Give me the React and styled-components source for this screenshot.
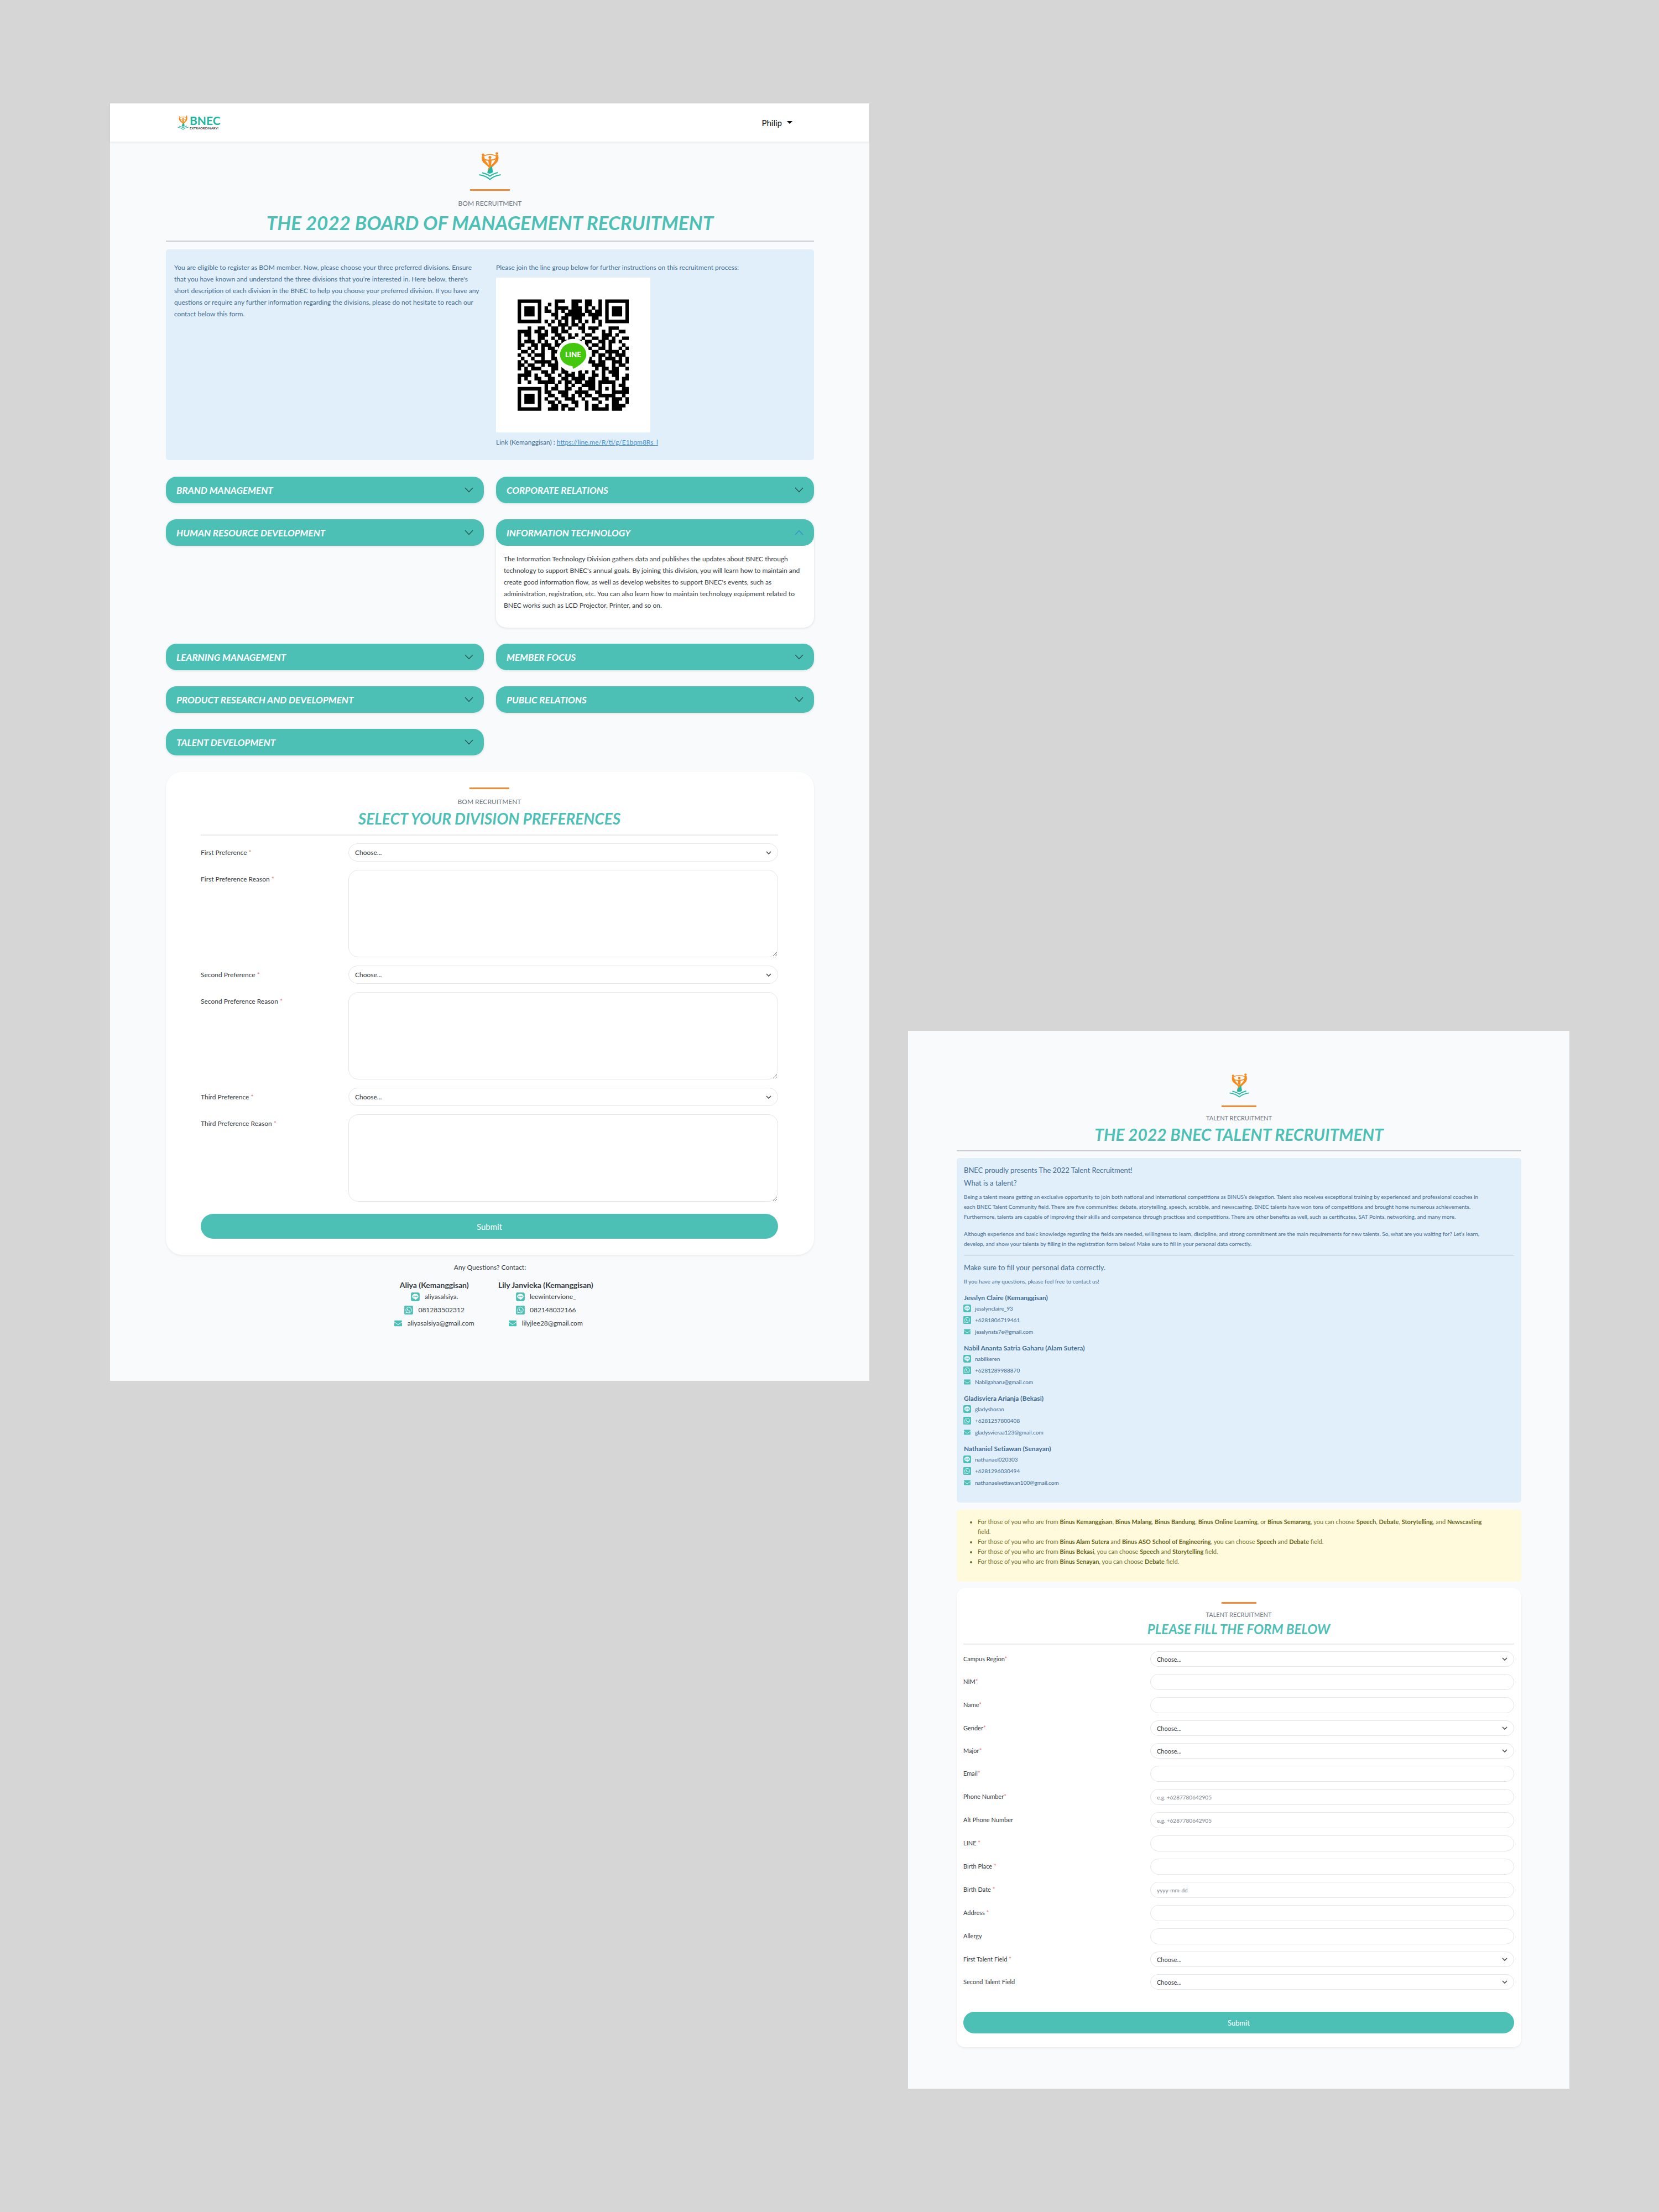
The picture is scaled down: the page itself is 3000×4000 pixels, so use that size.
import React from "react";
import styled, { createGlobalStyle } from "styled-components";
import { FaLine, FaWhatsappSquare, FaEnvelope } from "react-icons/fa";

const teal = "#4dc0b5";
const ink = "#343a40";
const blueInk = "#436c90";

const GlobalStyle = createGlobalStyle`
  *, *::before, *::after { box-sizing: border-box; }
  body {
    margin: 0;
    background: #d6d6d6;
    color: ${ink};
    font-family: Lato, "Liberation Sans", sans-serif;
    font-size: 12px;
  }
  h1, h2, h3, h4, p, ul, dl, dd { margin: 0; padding: 0; }
  button, input, select, textarea { font-family: inherit; }
`;

const Board = styled.div`
  display: grid;
  grid-template-columns: minmax(0, 1373fr) minmax(0, 1196fr);
  align-items: start;
  gap: 70px;
  padding: 187px 162px 60px 199px;
`;

const BomPage = styled.main`
  background: #f8fafc;
  padding-bottom: 92px;
`;

const TalentPage = styled.main`
  margin-top: 1677px;
  background: #f9fafc;
  padding: 77px 87px 75px 88px;
  font-size: 10px;
`;

const TopBar = styled.header`
  display: flex;
  align-items: center;
  justify-content: space-between;
  height: 69px;
  padding: 0 139px 0 122px;
  background: #fff;
  box-shadow: 0 2px 4px rgba(0, 0, 0, 0.07);
`;

const Brand = styled.a`
  display: flex;
  align-items: center;
  gap: 2px;
  text-decoration: none;
`;

const BrandText = styled.span`
  display: flex;
  flex-direction: column;
`;

const BrandName = styled.span`
  color: #1fb7a1;
  font-size: 21px;
  font-weight: 700;
  line-height: 20px;
`;

const BrandTag = styled.span`
  color: #444;
  font-size: 6px;
  font-weight: 700;
  line-height: 8px;
`;

const UserMenu = styled.button`
  display: flex;
  align-items: center;
  gap: 9px;
  padding: 0;
  border: 0;
  background: none;
  color: #111;
  font-size: 15px;
  line-height: 20px;
`;

const Caret = styled.span`
  border: 5px solid transparent;
  border-top-color: #111;
  border-bottom: 0;
`;

const Content = styled.div`
  padding: 19px 100px 0 101px;
`;

const Heading = styled.div`
  display: flex;
  flex-direction: column;
  align-items: center;
  text-align: center;
`;

const Bar = styled.span`
  width: ${(p) => (p.$small ? 63 : 72)}px;
  height: 3px;
  margin-top: ${(p) => p.$top}px;
  background: #f08b36;
`;

const Kicker = styled.p`
  margin-top: ${(p) => (p.$small ? 11 : 13)}px;
  color: #6c757d;
  font-size: ${(p) => (p.$small ? 11 : 12)}px;
  line-height: ${(p) => (p.$small ? 18 : 20)}px;
`;

const Title = styled.h1`
  margin-top: 3px;
  color: ${teal};
  font-size: ${(p) => p.$size}px;
  font-style: italic;
  font-weight: 700;
  line-height: ${(p) => p.$line}px;
`;

const Rule = styled.hr`
  width: 100%;
  height: 2px;
  margin: 12px 0 ${(p) => (p.$small ? 12 : 14)}px;
  border: 0;
  background: ${(p) => (p.$light ? "#e9ebec" : "#cacccf")};
`;

const Notice = styled.section`
  display: grid;
  grid-template-columns: 1fr 1fr;
  gap: 22px;
  padding: 22px 15px;
  border-radius: 5px;
  background: #e1effb;
  color: ${blueInk};
  line-height: 21px;
`;

const QrFrame = styled.div`
  width: 279px;
  height: 280px;
  margin: 8px 0 7px;
  padding: 39px;
  background: #fff;
  svg { display: block; width: 100%; height: 100%; }
`;

const TextLink = styled.a`
  color: #3f90d8;
`;

const Divisions = styled.section`
  display: grid;
  grid-template-columns: 1fr 1fr;
  align-items: start;
  gap: 29px 22px;
  margin: 30px 0;
`;

const Division = styled.article`
  border-radius: 19px;
  background: #fff;
  box-shadow: 0 1px 4px rgba(0, 0, 0, 0.12);
`;

const DivisionToggle = styled.button`
  display: flex;
  align-items: center;
  justify-content: space-between;
  width: 100%;
  height: 48px;
  padding: 0 19px;
  border: 0;
  border-radius: 19px;
  background: ${teal};
  color: #fff;
  font-size: 17px;
  font-style: italic;
  font-weight: 700;
  svg { width: 16px; height: 10px; }
`;

const DivisionText = styled.p`
  padding: 13px 14px 30px;
  line-height: 21px;
`;

const Card = styled.form`
  border-radius: ${(p) => (p.$small ? 15 : 29)}px;
  background: #fff;
  box-shadow: 0 2px 4px rgba(0, 0, 0, 0.06);
  padding: ${(p) => (p.$small ? "25px 13px 25px 12px" : "28px 65px 29px 63px")};
`;

const Fields = styled.div`
  display: flex;
  flex-direction: column;
  gap: ${(p) => (p.$small ? 13 : 15)}px;
`;

const FieldRow = styled.div`
  display: grid;
  grid-template-columns: ${(p) => (p.$small ? "338px 1fr" : "267px 1fr")};
  align-items: start;
`;

const Label = styled.label`
  font-size: ${(p) => (p.$small ? 11 : 12)}px;
  line-height: ${(p) => (p.$small ? 28 : 33)}px;
`;

const Required = styled.span`
  color: #e3706d;
`;

const SelectWrap = styled.div`
  position: relative;
  display: flex;
  svg {
    position: absolute;
    top: 50%;
    right: 12px;
    width: 10px;
    height: 8px;
    margin-top: -4px;
    pointer-events: none;
  }
`;

const Select = styled.select`
  width: 100%;
  height: ${(p) => (p.$small ? 28 : 33)}px;
  padding: 0 30px 0 11px;
  border: 1px solid #e3e6e8;
  border-radius: 17px;
  appearance: none;
  background: #fff;
  color: ${ink};
  font-size: ${(p) => (p.$small ? 11 : 12)}px;
`;

const Input = styled.input`
  width: 100%;
  height: 29px;
  padding: 0 11px;
  border: 1px solid #e3e6e8;
  border-radius: 15px;
  background: #fff;
  font-size: 10px;
  &::placeholder { color: #7b848c; opacity: 1; }
`;

const TextArea = styled.textarea`
  display: block;
  width: 100%;
  height: 158px;
  padding: 10px 11px;
  border: 1px solid #e3e6e8;
  border-radius: 18px;
  background: #fff;
  font-size: 12px;
  resize: vertical;
`;

const Submit = styled.button`
  display: block;
  width: 100%;
  height: ${(p) => (p.$small ? 39 : 45)}px;
  margin-top: ${(p) => (p.$small ? 40 : 22)}px;
  border: 0;
  border-radius: 23px;
  background: ${teal};
  color: #fff;
  font-size: ${(p) => (p.$small ? 13 : 15)}px;
`;

const Contacts = styled.footer`
  display: flex;
  flex-direction: column;
  align-items: center;
  margin-top: 13px;
  line-height: 20px;
`;

const ContactGrid = styled.div`
  display: grid;
  grid-template-columns: 1fr 1fr;
  gap: 30px;
  margin-top: 13px;
`;

const Person = styled.div`
  display: flex;
  flex-direction: column;
  align-items: center;
`;

const PersonName = styled.h3`
  font-size: 14px;
  line-height: 18px;
`;

const ContactLine = styled.p`
  display: flex;
  align-items: center;
  gap: ${(p) => (p.$mail ? 10 : 8)}px;
  height: 24px;
  svg { flex: none; color: ${teal}; font-size: ${(p) => (p.$mail ? 14 : 18)}px; }
`;

const TalentInfo = styled.section`
  padding: 11px 13px 26px;
  border-radius: 5px;
  background: #e1effb;
  color: ${blueInk};
  line-height: 18px;
`;

const Lead = styled.h2`
  font-size: 13px;
  font-weight: 400;
  line-height: 23px;
`;

const Para = styled.p`
  margin: 4px 0 ${(p) => p.$bottom}px;
`;

const InfoRule = styled.hr`
  height: 1px;
  margin: 0 0 10px;
  border: 0;
  background: #ccdbe8;
`;

const Crew = styled.div`
  display: flex;
  flex-direction: column;
  gap: 11px;
`;

const CrewName = styled.h3`
  font-size: 12px;
  line-height: 17px;
`;

const CrewLine = styled.p`
  display: flex;
  align-items: center;
  gap: 7px;
  height: 21px;
`;

const CrewIcon = styled.span`
  display: flex;
  justify-content: center;
  width: 14px;
  margin-left: -1px;
  color: ${teal};
  font-size: ${(p) => (p.$mail ? 12 : 16)}px;
  svg { flex: none; }
`;

const Rules = styled.ul`
  margin: 13px 0 12px;
  padding: 13px 13px 27px 38px;
  border-radius: 5px;
  background: #fffadb;
  color: #6f6d2c;
  font-size: 11px;
  line-height: 18px;
  b { color: #66641f; }
`;

const Trophy = ({ width, height }) => (
  <svg width={width} height={height} viewBox="0 0 40 51" preserveAspectRatio="none" fill="none" aria-hidden="true">
    <g fill="#f68b1f">
      <circle cx="7.5" cy="5" r="2.4" />
      <circle cx="32.5" cy="2.6" r="2.4" />
      <circle cx="20" cy="9.6" r="2.6" />
      <path d="M5.2 8 Q7 6 9.400 8 L11 13 Q11.500 16 14.500 19 Q19.500 24 20.500 31 Q16 25 10.500 21 Q4.500 17 5.200 8Z" />
      <path d="M30.500 6 Q33 4 35 6 Q37 15 31 20.500 Q24 27 20 31.500 Q17.500 34 16.500 38 Q14.500 32 19 27 Q25 21 28 17.500 Q30.500 14 30.500 6Z" />
      <path d="M17 14 Q20 12 23 14 L22.500 20 Q22 25 20.500 30 Q18 25 17.500 20Z" />
    </g>
    <path d="M9 7 Q20 1.500 31 7" stroke="#f68b1f" strokeWidth="1.500" />
    <path d="M9.500 13 Q20 17.500 31 12" stroke="#f68b1f" strokeWidth="2" />
    <path d="M23.500 25 L25.500 36 Q20 41.500 15 37 Q17 31 23.500 25Z" fill="#20b8a2" />
    <path d="M6 37.500 Q15 39.500 20 43.500 Q25 39.500 34 37" stroke="#20b8a2" strokeWidth="2" />
    <path d="M.5 41 Q13 43 20 49.500 Q27 43 39.500 41" stroke="#20b8a2" strokeWidth="2" />
  </svg>
);

const Chevron = ({ up }) => (
  <svg viewBox="0 0 16 10" fill="none" stroke={up ? "#3490c8" : "#24524f"} strokeWidth="1.300" aria-hidden="true">
    <path d={up ? "M1 9 L8 1.500 L15 9" : "M1 1 L8 8.500 L15 1"} />
  </svg>
);

const SelectChevron = () => (
  <svg viewBox="0 0 10 8" fill="none" stroke="#495057" strokeWidth="1.600" aria-hidden="true">
    <path d="M1 2 L5 6 L9 2" />
  </svg>
);

const qrRows = [
  "#######....###..###.##..#.#######",
  "#.....#..#.#....##..##..#.#.....#",
  "#.###.#.#..####.###.#.#.#.#.###.#",
  "#.###.#.##.#.#.####.##.##.#.###.#",
  "#.###.#...##..######.####.#.###.#",
  "#.....#....#.##.###...##..#.....#",
  "#######.#.#.#.#.#.#.#.#.#.#######",
  ".........#..###.##.#....#........",
  "...#..##..##.#.#..##.###...###...",
  "####.##.#.##.##....#..#..#.#..##.",
  "#.##..###..##..#.#..##...###.#...",
  "#..#..##..#.##.##..#..##.##.#..##",
  "#.###.#.#..#.##.#.#.##..##.##.#..",
  "##..##.###.##.......#.##.#.#...#.",
  "#..#.#.#.##.#........#..##.#..#.#",
  ".##.#..#..##..........##..####.#.",
  "#..#.###..#...........#.##.#.###.",
  ".#..#..#..##.........#..#.###.#.#",
  "#.#..#####.#.........##.##..###.#",
  "##.##..#.###..........####..#.##.",
  "#.#.###...##.#.........#.##.##..#",
  "..##...##.#..##.#.#.#.#..#.###...",
  "####.#..##..#.###.##..##.#..##..#",
  "#.#..##..##..##.####.##..##..#.##",
  "#..#..#####.#.##.##.###.#####..#.",
  "........#..#..#.#..####.#...#.##.",
  "#######.#.##..##..#..##.#.#.#..##",
  "#.....#.##..###..####..##...#####",
  "#.###.#..##..##.#.#.##..#####..#.",
  "#.###.#.#..#..###..#..##..#.###.#",
  "#.###.#..##.#...##..#...#...##..#",
  "#.....#...##.##..#..#.##..#.####.",
  "#######..###.#.##...#.#####.###..",
];

const LineQr = () => (
  <svg viewBox="0 0 33 33" role="img" aria-label="LINE group QR code" shapeRendering="geometricPrecision">
    <path
      fill="#000"
      d={qrRows.map((row, y) => [...row].map((c, x) => (c === "#" ? `M${x} ${y}h1.040v1.040h-1.040z` : "")).join("")).join("")}
    />
    <circle cx="16.500" cy="16.600" r="4.900" fill="#fff" />
    <path d="M16.500 12.900c2.200 0 3.900 1.500 3.900 3.500 0 1.900-2.300 3.400-3.900 4.200-.3-.3 0-.7-.3-.8-2-.2-3.600-1.500-3.600-3.400 0-2 1.700-3.500 3.900-3.500z" fill="#44c80d" />
    <text x="16.500" y="17.200" fill="#fff" fontFamily="Lato, sans-serif" fontSize="2.200" fontWeight="900" textAnchor="middle">LINE</text>
  </svg>
);

const divisions = [
  "BRAND MANAGEMENT",
  "CORPORATE RELATIONS",
  "HUMAN RESOURCE DEVELOPMENT",
  "INFORMATION TECHNOLOGY",
  "LEARNING MANAGEMENT",
  "MEMBER FOCUS",
  "PRODUCT RESEARCH AND DEVELOPMENT",
  "PUBLIC RELATIONS",
  "TALENT DEVELOPMENT",
];

const bomContacts = [
  { name: "Aliya (Kemanggisan)", line: "aliyasalsiya.", phone: "081283502312", mail: "aliyasalsiya@gmail.com" },
  { name: "Lily Janvieka (Kemanggisan)", line: "leewintervione_", phone: "082148032166", mail: "lilyjlee28@gmail.com" },
];

const talentContacts = [
  { name: "Jesslyn Claire (Kemanggisan)", line: "jesslynclaire_93", phone: "+6281806719461", mail: "jesslynsts7e@gmail.com" },
  { name: "Nabil Ananta Satria Gaharu (Alam Sutera)", line: "nabilkeren", phone: "+6281289988870", mail: "Nabilgaharu@gmail.com" },
  { name: "Gladisviera Arianja (Bekasi)", line: "gladyshoran", phone: "+6281257800408", mail: "gladysvieraa123@gmail.com" },
  { name: "Nathaniel Setiawan (Senayan)", line: "nathanael020303", phone: "+6281296030494", mail: "nathanaelsetiawan100@gmail.com" },
];

const talentFields = [
  { label: "Campus Region", mark: "*", select: true },
  { label: "NIM", mark: "*" },
  { label: "Name", mark: "*" },
  { label: "Gender", mark: "*", select: true },
  { label: "Major", mark: "*", select: true },
  { label: "Email", mark: "*" },
  { label: "Phone Number", mark: "*", hint: "e.g. +6287780642905" },
  { label: "Alt Phone Number", hint: "e.g. +6287780642905" },
  { label: "LINE", mark: " *" },
  { label: "Birth Place", mark: " *" },
  { label: "Birth Date", mark: " *", hint: "yyyy-mm-dd" },
  { label: "Address", mark: " *" },
  { label: "Allergy" },
  { label: "First Talent Field", mark: " *", select: true },
  { label: "Second Talent Field", select: true },
];

const ChooseBox = ({ id, small }) => (
  <SelectWrap>
    <Select id={id} $small={small} defaultValue="">
      <option value="">Choose...</option>
    </Select>
    <SelectChevron />
  </SelectWrap>
);

const BomRecruitment = () => (
  <BomPage>
    <TopBar>
      <Brand href="#home">
        <Trophy width={20} height={26} />
        <BrandText>
          <BrandName>BNEC</BrandName>
          <BrandTag>EXTRAORDINARY!</BrandTag>
        </BrandText>
      </Brand>
      <UserMenu type="button">
        Philip
        <Caret />
      </UserMenu>
    </TopBar>

    <Content>
      <Heading>
        <Trophy width={40} height={51} />
        <Bar $top={16} />
        <Kicker>BOM RECRUITMENT</Kicker>
        <Title $size={35} $line={42}>THE 2022 BOARD OF MANAGEMENT RECRUITMENT</Title>
        <Rule />
      </Heading>

      <Notice>
        <p>
          You are eligible to register as BOM member. Now, please choose your three preferred divisions. Ensure
          <br />
          that you have known and understand the three divisions that you’re interested in. Here below, there's
          <br />
          short description of each division in the BNEC to help you choose your preferred division. If you have any
          <br />
          questions or require any further information regarding the divisions, please do not hesitate to reach our
          <br />
          contact below this form.
        </p>
        <div>
          <p>Please join the line group below for further instructions on this recruitment process:</p>
          <QrFrame>
            <LineQr />
          </QrFrame>
          <p>
            Link (Kemanggisan) : <TextLink href="#line-group">https://line.me/R/ti/g/E1bqm8Rs_l</TextLink>
          </p>
        </div>
      </Notice>

      <Divisions>
        {divisions.map((name) => {
          const open = name === "INFORMATION TECHNOLOGY";
          return (
            <Division key={name}>
              <DivisionToggle type="button" aria-expanded={open}>
                {name}
                <Chevron up={open} />
              </DivisionToggle>
              {open && (
                <DivisionText>
                  The Information Technology Division gathers data and publishes the updates about BNEC through
                  <br />
                  technology to support BNEC's annual goals. By joining this division, you will learn how to maintain and
                  <br />
                  create good information flow, as well as develop websites to support BNEC's events, such as
                  <br />
                  administration, registration, etc. You can also learn how to maintain technology equipment related to
                  <br />
                  BNEC works such as LCD Projector, Printer, and so on.
                </DivisionText>
              )}
            </Division>
          );
        })}
      </Divisions>

      <Card>
        <Heading>
          <Bar $top={0} />
          <Kicker>BOM RECRUITMENT</Kicker>
          <Title as="h2" $size={28} $line={34}>SELECT YOUR DIVISION PREFERENCES</Title>
          <Rule $light />
        </Heading>
        <Fields>
          {["First", "Second", "Third"].map((nth) => (
            <React.Fragment key={nth}>
              <FieldRow>
                <Label htmlFor={`${nth}-choice`}>
                  {nth} Preference <Required>*</Required>
                </Label>
                <ChooseBox id={`${nth}-choice`} />
              </FieldRow>
              <FieldRow>
                <Label htmlFor={`${nth}-reason`}>
                  {nth} Preference Reason <Required>*</Required>
                </Label>
                <TextArea id={`${nth}-reason`} />
              </FieldRow>
            </React.Fragment>
          ))}
        </Fields>
        <Submit type="button">Submit</Submit>
      </Card>

      <Contacts>
        <p>Any Questions? Contact:</p>
        <ContactGrid>
          {bomContacts.map((c) => (
            <Person key={c.name}>
              <PersonName>{c.name}</PersonName>
              <ContactLine><FaLine />{c.line}</ContactLine>
              <ContactLine><FaWhatsappSquare />{c.phone}</ContactLine>
              <ContactLine $mail><FaEnvelope />{c.mail}</ContactLine>
            </Person>
          ))}
        </ContactGrid>
      </Contacts>
    </Content>
  </BomPage>
);

const TalentRecruitment = () => (
  <TalentPage>
    <Heading>
      <Trophy width={36} height={44} />
      <Bar $small $top={14} />
      <Kicker $small>TALENT RECRUITMENT</Kicker>
      <Title $size={30} $line={34}>THE 2022 BNEC TALENT RECRUITMENT</Title>
      <Rule $small />
    </Heading>

    <TalentInfo>
      <Lead>BNEC proudly presents The 2022 Talent Recruitment!</Lead>
      <Lead>What is a talent?</Lead>
      <Para $bottom={13}>
        Being a talent means getting an exclusive opportunity to join both national and international competitions as
        BINUS’s delegation. Talent also receives exceptional training by experienced and professional coaches in
        <br />
        each BNEC Talent Community field. There are five communities: debate, storytelling, speech, scrabble, and
        newscasting. BNEC talents have won tons of competitions and brought home numerous achievements.
        <br />
        Furthermore, talents are capable of improving their skills and competence through practices and competitions.
        There are other benefits as well, such as certificates, SAT Points, networking, and many more.
      </Para>
      <Para $bottom={12}>
        Although experience and basic knowledge regarding the fields are needed, willingness to learn, discipline, and
        strong commitment are the main requirements for new talents. So, what are you waiting for? Let’s learn,
        <br />
        develop, and show your talents by filling in the registration form below! Make sure to fill in your personal
        data correctly.
      </Para>
      <InfoRule />
      <Lead>Make sure to fill your personal data correctly.</Lead>
      <Para $bottom={12}>If you have any questions, please feel free to contact us!</Para>
      <Crew>
        {talentContacts.map((c) => (
          <div key={c.name}>
            <CrewName>{c.name}</CrewName>
            <CrewLine><CrewIcon><FaLine /></CrewIcon>{c.line}</CrewLine>
            <CrewLine><CrewIcon><FaWhatsappSquare /></CrewIcon>{c.phone}</CrewLine>
            <CrewLine><CrewIcon $mail><FaEnvelope /></CrewIcon>{c.mail}</CrewLine>
          </div>
        ))}
      </Crew>
    </TalentInfo>

    <Rules>
      <li>
        For those of you who are from <b>Binus Kemanggisan</b>, <b>Binus Malang</b>, <b>Binus Bandung</b>,{" "}
        <b>Binus Online Learning</b>, or <b>Binus Semarang</b>, you can choose <b>Speech</b>, <b>Debate</b>,{" "}
        <b>Storytelling</b>, and <b>Newscasting</b>
        <br />
        field.
      </li>
      <li>
        For those of you who are from <b>Binus Alam Sutera</b> and <b>Binus ASO School of Engineering</b>, you can
        choose <b>Speech</b> and <b>Debate</b> field.
      </li>
      <li>
        For those of you who are from <b>Binus Bekasi</b>, you can choose <b>Speech</b> and <b>Storytelling</b> field.
      </li>
      <li>
        For those of you who are from <b>Binus Senayan</b>, you can choose <b>Debate</b> field.
      </li>
    </Rules>

    <Card $small>
      <Heading>
        <Bar $small $top={0} />
        <Kicker $small>TALENT RECRUITMENT</Kicker>
        <Title as="h2" $size={24} $line={28}>PLEASE FILL THE FORM BELOW</Title>
        <Rule $small $light />
      </Heading>
      <Fields $small>
        {talentFields.map((f, i) => (
          <FieldRow key={f.label} $small>
            <Label htmlFor={`talent-${i}`} $small>
              {f.label}
              {f.mark && <Required>{f.mark}</Required>}
            </Label>
            {f.select ? <ChooseBox id={`talent-${i}`} small /> : <Input id={`talent-${i}`} placeholder={f.hint} />}
          </FieldRow>
        ))}
      </Fields>
      <Submit type="button" $small>Submit</Submit>
    </Card>
  </TalentPage>
);

export default function App() {
  return (
    <>
      <GlobalStyle />
      <Board>
        <BomRecruitment />
        <TalentRecruitment />
      </Board>
    </>
  );
}
